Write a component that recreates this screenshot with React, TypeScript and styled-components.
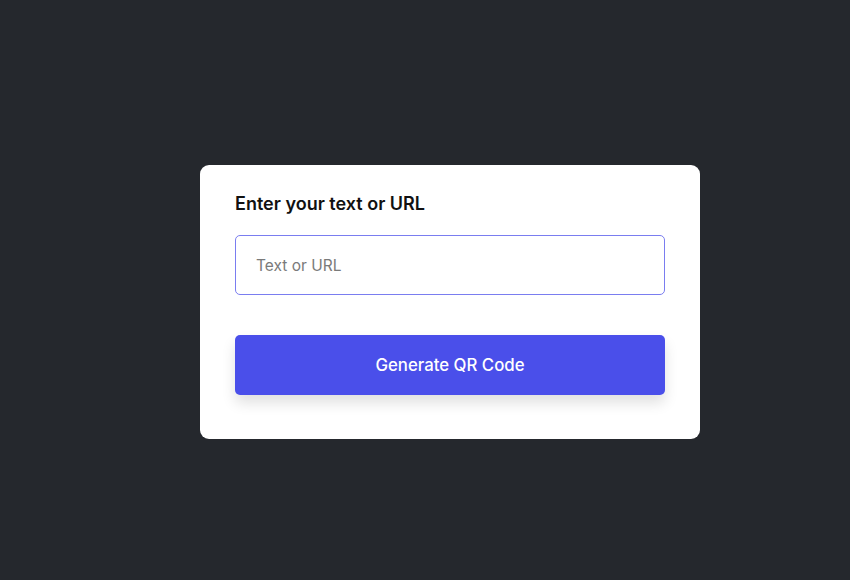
import styled, { createGlobalStyle } from "styled-components";

const GlobalStyle = createGlobalStyle`
  html, body {
    margin: 0;
    padding: 0;
    background: #25282d;
  }
  * {
    box-sizing: border-box;
  }
`;

const Page = styled.div`
  width: 100%;
  height: 580px;
  display: flex;
  align-items: center;
  justify-content: center;
  padding: 24px 0 0 50px;
  font-family: Inter, "Open Sans", sans-serif;
`;

const Card = styled.div`
  width: 500px;
  background: #ffffff;
  border-radius: 9px;
  padding: 28px 35px 44px;
  display: flex;
  flex-direction: column;
`;

const Title = styled.p`
  margin: 0 0 20px;
  font-size: 18px;
  line-height: 22px;
  font-weight: 600;
  color: #111;
`;

const Input = styled.input`
  width: 100%;
  height: 60px;
  border: 1px solid #7a7df0;
  border-radius: 5px;
  padding: 0 20px;
  font-family: inherit;
  font-size: 15.5px;
  color: #333;
  outline: none;

  &::placeholder {
    color: #7a7a7a;
  }
`;

const Button = styled.button`
  width: 100%;
  height: 60px;
  margin-top: 40px;
  border: none;
  border-radius: 5px;
  background: #4a4fea;
  color: #fff;
  font-family: inherit;
  font-size: 16.8px;
  font-weight: 500;
  box-shadow: 0 8px 14px rgba(0, 0, 0, 0.12);
  cursor: pointer;
`;

export default function App() {
  return (
    <>
      <GlobalStyle />
      <Page>
        <Card>
          <Title>Enter your text or URL</Title>
          <Input type="text" placeholder="Text or URL" />
          <Button>Generate QR Code</Button>
        </Card>
      </Page>
    </>
  );
}
